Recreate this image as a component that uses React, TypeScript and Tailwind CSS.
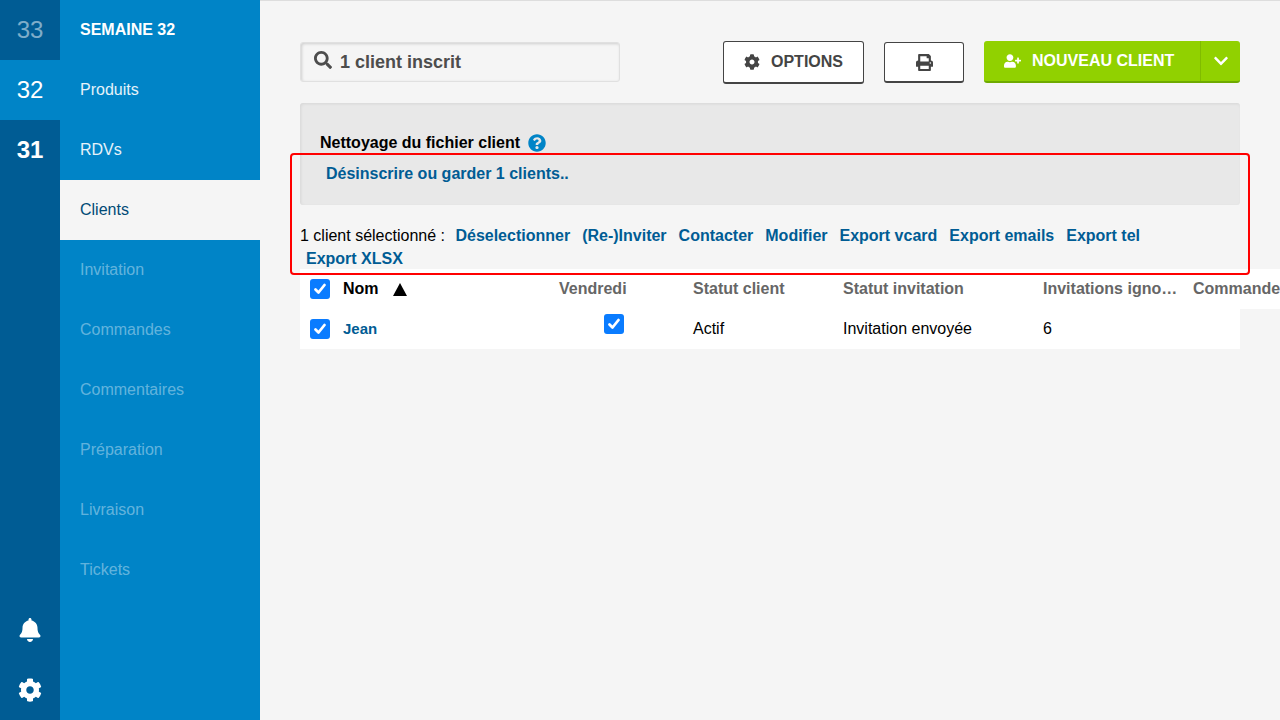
import { FaBell, FaChevronDown, FaCog, FaPrint, FaQuestionCircle, FaSearch, FaUserPlus } from "react-icons/fa";

const MENU = [
  { label: "Produits", state: "on" },
  { label: "RDVs", state: "on" },
  { label: "Clients", state: "active" },
  { label: "Invitation", state: "off" },
  { label: "Commandes", state: "off" },
  { label: "Commentaires", state: "off" },
  { label: "Préparation", state: "off" },
  { label: "Livraison", state: "off" },
  { label: "Tickets", state: "off" },
];

const ACTIONS = ["Déselectionner", "(Re-)Inviter", "Contacter", "Modifier", "Export vcard", "Export emails", "Export tel", "Export XLSX"];

function Check() {
  return (
    <span className="flex h-5 w-5 items-center justify-center rounded-[3px] bg-[#0a7cff]">
      <svg viewBox="0 0 16 16" className="h-4 w-4" fill="none" stroke="white" strokeWidth="2.8" strokeLinecap="round" strokeLinejoin="round">
        <path d="M3.5 8.5l3 3 6-7.5" />
      </svg>
    </span>
  );
}

export default function App() {
  return (
    <div className="flex h-[720px] w-[1280px] overflow-hidden bg-[#f5f5f5] font-['Liberation_Sans',Arial,sans-serif] text-base text-black">
      {/* weeks */}
      <div className="flex w-[60px] shrink-0 flex-col bg-[#005c94] text-[24px] text-white">
        <div className="flex h-[60px] items-center justify-center text-white/50">33</div>
        <div className="flex h-[60px] items-center justify-center bg-[#0084c7]">32</div>
        <div className="flex h-[60px] items-center justify-center font-bold">31</div>
        <div className="mt-auto flex h-[60px] items-center justify-center">
          <FaBell className="h-[24px] w-[22px]" />
        </div>
        <div className="flex h-[60px] items-center justify-center">
          <FaCog className="h-[24px] w-[24px]" />
        </div>
      </div>

      {/* menu */}
      <div className="flex w-[200px] shrink-0 flex-col bg-[#0084c7] text-white">
        <div className="flex h-[60px] items-center pl-5 font-bold">SEMAINE 32</div>
        {MENU.map((item) => (
          <div
            key={item.label}
            className={
              item.state === "active"
                ? "flex h-[60px] items-center bg-[#f5f5f5] pl-5 text-[#004a75]"
                : item.state === "off"
                  ? "flex h-[60px] items-center pl-5 text-white/40"
                  : "flex h-[60px] items-center pl-5 text-white/90"
            }
          >
            {item.label}
          </div>
        ))}
      </div>

      {/* content */}
      <div className="relative min-w-0 flex-1 border-t border-[#dddddd] px-10 pt-[40px]">
        <div className="flex h-[44px] items-start">
          <div className="mt-px flex h-10 w-[320px] items-center rounded-[3px] border border-[#e0e0e0] pl-[13px] text-[18px] font-bold text-[#4d4d4d] shadow-[inset_1px_1px_3px_rgba(0,0,0,0.16)]">
            <FaSearch className="mr-2 -mt-1 h-[18px] w-[18px]" />
            1 client inscrit
          </div>
          <button className="ml-[103px] flex h-[43px] w-[141px] items-center justify-center rounded-[3px] border border-b-2 border-[#444444] bg-white font-bold text-[#444444]">
            <FaCog className="mr-[11px] h-4 w-4" />
            OPTIONS
          </button>
          <button className="mt-px ml-5 flex h-[41px] w-[80px] items-center justify-center rounded-[3px] border border-b-2 border-[#444444] bg-white text-[#444444]">
            <FaPrint className="h-[17px] w-[17px]" />
          </button>
          <div className="ml-5 flex h-[42px] w-[256px] rounded-[3px] border-b-2 border-[#6eaa00] bg-[#91d100] font-bold text-white">
            <div className="flex flex-1 items-center border-r border-[#80bb00] pl-5">
              <FaUserPlus className="mr-[11px] h-[14px] w-[17px]" />
              NOUVEAU CLIENT
            </div>
            <div className="flex w-[39px] items-center justify-center">
              <FaChevronDown className="h-4 w-4" />
            </div>
          </div>
        </div>

        <div className="mt-[18px] h-[102px] rounded-[3px] bg-[#e8e8e8] px-5 pt-[28px] shadow-[inset_1px_1px_3px_rgba(0,0,0,0.08)]">
          <div className="flex h-[23px] items-center font-bold">
            Nettoyage du fichier client
            <FaQuestionCircle className="ml-2 h-[18px] w-[18px] text-[#0084c7]" />
          </div>
          <div className="mt-2 ml-1.5 font-bold text-[#005c94]">Désinscrire ou garder 1 clients..</div>
        </div>

        <div className="mt-[19px] leading-[23px]">
          <span>1 client sélectionné : </span>
          {ACTIONS.map((action) => (
            <a key={action} className="mx-1.5 inline-block font-bold text-[#005c94]">
              {action}
            </a>
          ))}
        </div>

        <div className="-mt-px w-[940px]">
          <div className="flex h-10 w-[980px] items-center overflow-hidden bg-white font-bold text-[#666666]">
            <span className="ml-2.5 shrink-0"><Check /></span>
            <span className="ml-[13px] w-[60px] shrink-0 text-black">Nom</span>
            <svg viewBox="0 0 14 13" className="-ml-2.5 h-[13px] w-[14px] shrink-0 fill-black">
              <path d="M7 0l7 13H0z" />
            </svg>
            <span className="ml-[152px] w-[134px] shrink-0">Vendredi</span>
            <span className="w-[150px] shrink-0">Statut client</span>
            <span className="w-[200px] shrink-0">Statut invitation</span>
            <span className="w-[150px] shrink-0 truncate pr-3">Invitations ignorées</span>
            <span className="shrink-0 whitespace-nowrap">Commandes</span>
          </div>
          <div className="flex h-10 items-center bg-white">
            <span className="ml-2.5"><Check /></span>
            <span className="ml-[13px] w-[261px] text-[15px] font-bold text-[#005c94]">Jean</span>
            <span className="mb-[10px] w-[89px]"><Check /></span>
            <span className="w-[150px]">Actif</span>
            <span className="w-[200px]">Invitation envoyée</span>
            <span>6</span>
          </div>
        </div>

        {/* highlight around the bulk actions */}
        <div className="pointer-events-none absolute top-[152px] left-[30px] h-[122px] w-[960px] rounded-[4px] border-2 border-[#ff0000]" />
      </div>
    </div>
  );
}
